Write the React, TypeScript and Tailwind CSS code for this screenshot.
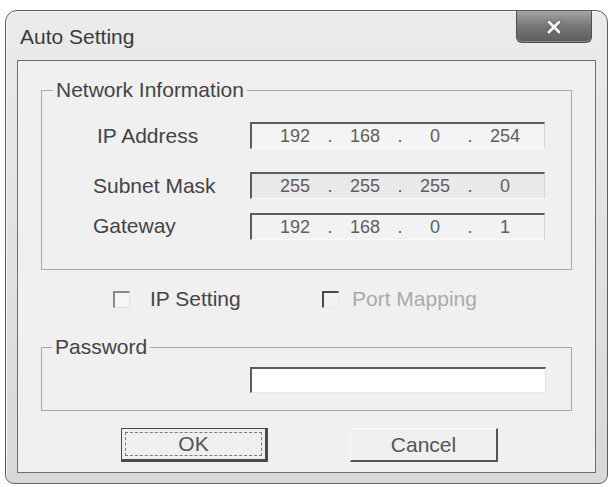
import React from "react";

function IpField({ parts, bg }: { parts: string[]; bg: string }) {
  const cells: React.ReactNode[] = [];
  parts.forEach((p, i) => {
    cells.push(
      <span key={"n" + i} className="w-[50px] text-center">
        {p}
      </span>
    );
    if (i < parts.length - 1)
      cells.push(
        <span key={"s" + i} className="w-[20px] text-center">
          .
        </span>
      );
  });
  return (
    <div
      className={
        "w-[295px] h-[27px] border-t-2 border-l-2 border-r border-b border-t-[#5c5c5c] border-l-[#5c5c5c] border-r-[#d6d6d6] border-b-[#fafafa] flex items-center pl-[18px] text-[18px] leading-[20px] text-[#5e5e5e] " +
        bg
      }
    >
      {cells}
    </div>
  );
}

export default function App() {
  return (
    <div className="w-[612px] h-[487px] bg-white overflow-hidden pt-[10px] pl-[5px] font-['Liberation_Sans',Arial,sans-serif] text-[#444]">
      <div className="w-[603px] h-[474px] rounded-t-[12px] rounded-b-[9px] border border-[#5e5e5e] bg-linear-to-b from-[#ebebeb] to-[#d8d8d8] flex flex-col px-[11px] pb-[10px] shadow-[inset_1px_1px_0_#f8f8f8]">
        {/* Title bar */}
        <div className="h-[49px] flex items-start justify-between">
          <div className="pl-[3px] pt-[14px] text-[21px] leading-[24px] text-[#3a3a3a]">
            Auto Setting
          </div>
          <div className="mr-[4px] w-[76px] h-[32px] rounded-b-[6px] border border-t-0 border-[#4e4e4e] bg-linear-to-b from-[#a4a4a4] via-[#767676] to-[#5c5c5c] flex items-center justify-center shadow-[inset_0_-1px_0_#8a8a8a]">
            <svg width="18" height="14" viewBox="0 0 18 14">
              <path
                d="M4 2 L14 12 M14 2 L4 12"
                stroke="#555"
                strokeWidth="4.5"
                strokeLinecap="round"
              />
              <path
                d="M4 2 L14 12 M14 2 L4 12"
                stroke="#f2f2f2"
                strokeWidth="3"
                strokeLinecap="round"
              />
            </svg>
          </div>
        </div>

        {/* Client area */}
        <div className="flex-1 border border-[#6e6e6e] bg-[#f0f0f0] flex flex-col items-start text-[21px] leading-[24px]">
          <fieldset className="ml-[23px] mt-[17px] w-[531px] h-[192px] border border-[#a8a8a8]">
            <legend className="ml-[11px] px-[3px]">Network Information</legend>
            <div className="flex flex-col pt-[20px]">
              <div className="flex items-center h-[27px]">
                <div className="w-[208px] pl-[55px]">IP Address</div>
                <IpField parts={["192", "168", "0", "254"]} bg="bg-[#f4f4f4]" />
              </div>
              <div className="flex items-center h-[27px] mt-[23px]">
                <div className="w-[208px] pl-[51px]">Subnet Mask</div>
                <IpField parts={["255", "255", "255", "0"]} bg="bg-[#e9e9e9]" />
              </div>
              <div className="flex items-center h-[28px] mt-[13px]">
                <div className="w-[208px] pl-[51px]">Gateway</div>
                <IpField parts={["192", "168", "0", "1"]} bg="bg-[#f2f2f2]" />
              </div>
            </div>
          </fieldset>

          {/* Checkboxes */}
          <div className="mt-[20px] ml-[95px] h-[18px] flex items-center">
            <div className="w-[17px] h-[17px] border-t-2 border-l-2 border-r border-b border-t-[#8a8a8a] border-l-[#8a8a8a] border-r-[#e0e0e0] border-b-[#e0e0e0] bg-[#f6f6f6]" />
            <div className="ml-[20px] w-[172px]">IP Setting</div>
            <div className="w-[17px] h-[17px] border-t-2 border-l-2 border-r border-b border-t-[#4a4a4a] border-l-[#4a4a4a] border-r-[#e8e8e8] border-b-[#e8e8e8] bg-[#f2f2f2]" />
            <div className="ml-[13px] text-[#ababab]">Port Mapping</div>
          </div>

          {/* Password */}
          <fieldset className="ml-[23px] mt-[27px] w-[531px] h-[76px] border border-[#a8a8a8]">
            <legend className="ml-[10px] px-[3px]">Password</legend>
            <div className="pt-[8px] pl-[208px]">
              <div className="w-[296px] h-[26px] bg-white border-t-2 border-l-2 border-r border-b border-t-[#5c5c5c] border-l-[#5c5c5c] border-r-[#e0e0e0] border-b-[#e8e8e8]" />
            </div>
          </fieldset>

          {/* Buttons */}
          <div className="mt-[17px] ml-[103px] flex gap-[82px]">
            <div className="w-[147px] h-[34px] border border-r-[3px] border-b-[3px] border-[#4a4a4a] bg-[#efefef] p-[3px]">
              <div className="w-full h-full border border-dashed border-[#7a7a7a] flex items-center justify-center text-[#555]">
                OK
              </div>
            </div>
            <div className="w-[148px] h-[34px] border-t border-l border-r-2 border-b-2 border-t-[#fafafa] border-l-[#fafafa] border-r-[#555] border-b-[#555] bg-[#efefef] flex items-center justify-center text-[#555]">
              Cancel
            </div>
          </div>
        </div>
      </div>
    </div>
  );
}
